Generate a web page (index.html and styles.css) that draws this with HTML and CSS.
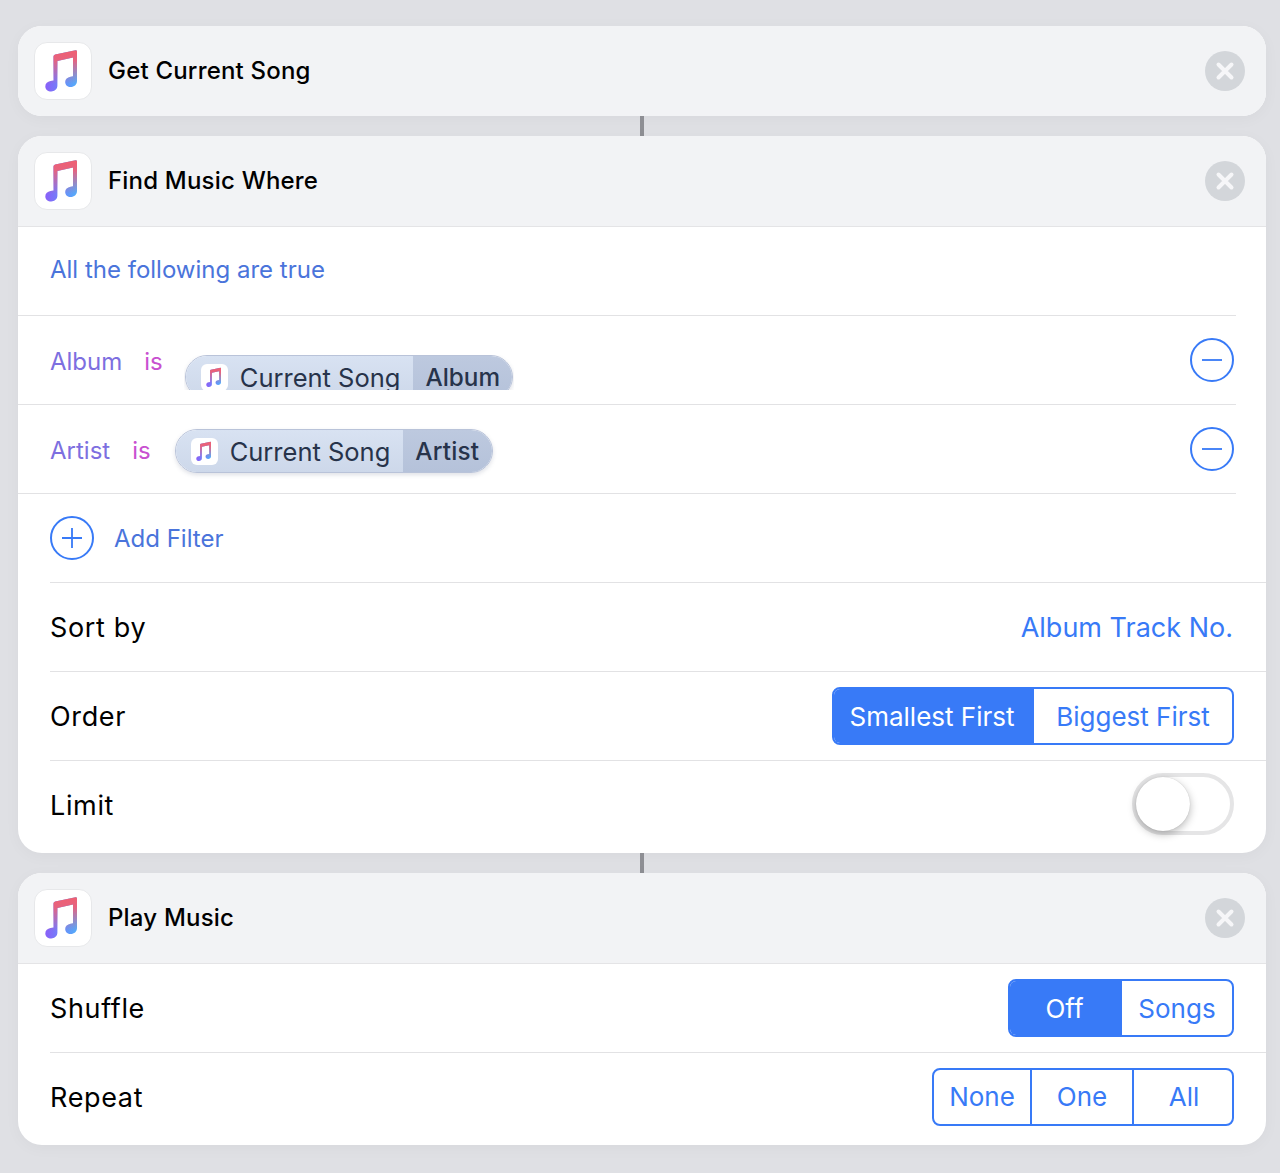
FILE: index.html
```html
<!DOCTYPE html>
<html lang="en">
<head>
<meta charset="utf-8">
<title>Shortcut</title>
<link rel="stylesheet" href="styles.css">
</head>
<body>
<svg class="defs" width="0" height="0" aria-hidden="true">
  <defs>
    <linearGradient id="noteBase" x1="11" y1="0" x2="43" y2="0" gradientUnits="userSpaceOnUse">
      <stop offset="0" stop-color="#8a5ef8"/><stop offset="1" stop-color="#52aefa"/>
    </linearGradient>
    <linearGradient id="noteTop" x1="0" y1="8" x2="0" y2="42" gradientUnits="userSpaceOnUse">
      <stop offset="0" stop-color="#ef5f72"/><stop offset="0.3" stop-color="#e6637f"/><stop offset="1" stop-color="#dc648e" stop-opacity="0"/>
    </linearGradient>
    <symbol id="note" viewBox="0 0 58 58">
      <path fill="url(#noteBase)" d="M19.500 14.500Q19.500 12.800 21.200 12.400L41.500 8.200Q43 8 43 9.500V39C43 42.800 40 45 36.800 45C33.600 45 31.200 43 31.200 40C31.200 37 33.500 35.300 36.500 34.700L39 34.200V15.600L23.400 18.900V43.500C23.400 47.300 20.500 49.400 17.200 49.400C14 49.400 11.300 47.400 11.300 44.400C11.300 41.400 13.600 39.600 16.500 39L19.500 38.400Z"/>
      <path fill="url(#noteTop)" d="M19.500 14.500Q19.500 12.800 21.200 12.400L41.500 8.200Q43 8 43 9.500V39C43 42.800 40 45 36.800 45C33.600 45 31.200 43 31.200 40C31.200 37 33.500 35.300 36.500 34.700L39 34.200V15.600L23.400 18.900V43.500C23.400 47.300 20.500 49.400 17.200 49.400C14 49.400 11.300 47.400 11.300 44.400C11.300 41.400 13.600 39.600 16.500 39L19.500 38.400Z"/>
    </symbol>
  </defs>
</svg>
<main class="flow">
  <section class="card">
    <header class="head">
      <span class="tile"><svg class="tile-note"><use href="#note"/></svg></span>
      <h2 class="title">Get Current Song</h2>
      <button class="close" aria-label="Remove"><svg viewBox="0 0 40 40" class="close-x"><path d="M13.500 13.500l13 13M26.500 13.500l-13 13"/></svg></button>
    </header>
  </section>
  <div class="link"></div>
  <section class="card">
    <header class="head head-line">
      <span class="tile"><svg class="tile-note"><use href="#note"/></svg></span>
      <h2 class="title">Find Music Where</h2>
      <button class="close" aria-label="Remove"><svg viewBox="0 0 40 40" class="close-x"><path d="M13.500 13.500l13 13M26.500 13.500l-13 13"/></svg></button>
    </header>
    <div class="frow frow-lead"><span class="link-text">All the following are true</span></div>
    <div class="frow">
      <span class="prop">Album</span><span class="is">is</span>
      <div class="pill-clip">
        <div class="pill">
          <span class="pill-main"><span class="mini"><svg class="mini-note"><use href="#note"/></svg></span>Current Song</span>
          <span class="pill-sub">Album</span>
        </div>
      </div>
      <button class="round" aria-label="Remove filter"><svg viewBox="0 0 44 44" class="round-i"><path d="M11 22h22"/></svg></button>
    </div>
    <div class="frow">
      <span class="prop">Artist</span><span class="is">is</span>
      <div class="pill pill-full">
        <span class="pill-main"><span class="mini"><svg class="mini-note"><use href="#note"/></svg></span>Current Song</span>
        <span class="pill-sub pill-sub-artist">Artist</span>
      </div>
      <button class="round" aria-label="Remove filter"><svg viewBox="0 0 44 44" class="round-i"><path d="M11 22h22"/></svg></button>
    </div>
    <div class="add">
      <button class="round round-left" aria-label="Add filter"><svg viewBox="0 0 44 44" class="round-i"><path d="M11 22h22M22 11v22"/></svg></button>
      <span class="link-text">Add Filter</span>
    </div>
    <div class="srow"><span class="label">Sort by</span><span class="value">Album Track No.</span></div>
    <div class="srow">
      <span class="label">Order</span>
      <div class="seg">
        <span class="opt opt-on opt-small">Smallest First</span>
        <span class="opt opt-big">Biggest First</span>
      </div>
    </div>
    <div class="srow srow-last">
      <span class="label">Limit</span>
      <span class="toggle"><span class="knob"></span></span>
    </div>
  </section>
  <div class="link"></div>
  <section class="card">
    <header class="head head-line">
      <span class="tile"><svg class="tile-note"><use href="#note"/></svg></span>
      <h2 class="title">Play Music</h2>
      <button class="close" aria-label="Remove"><svg viewBox="0 0 40 40" class="close-x"><path d="M13.500 13.500l13 13M26.500 13.500l-13 13"/></svg></button>
    </header>
    <div class="srow">
      <span class="label">Shuffle</span>
      <div class="seg">
        <span class="opt opt-on opt-off">Off</span>
        <span class="opt opt-songs">Songs</span>
      </div>
    </div>
    <div class="srow srow-end">
      <span class="label">Repeat</span>
      <div class="seg">
        <span class="opt opt-none">None</span>
        <span class="opt opt-one">One</span>
        <span class="opt opt-all">All</span>
      </div>
    </div>
  </section>
</main>
</body>
</html>
```
FILE: styles.css
```css
* { box-sizing: border-box; }
html, body { margin: 0; height: 100%; }
body {
  background: #dfe0e4;
  font-family: Inter, "Liberation Sans", sans-serif;
  color: #000;
  overflow: hidden;
}
.defs { position: absolute; }
.flow { width: 1248px; margin: 0 0 0 18px; padding-top: 26px; }
.card {
  background: #fff;
  border-radius: 24px;
  overflow: hidden;
  box-shadow: 0 3px 16px rgba(0, 0, 0, .035);
}
.link { width: 4px; height: 20px; margin: 0 auto; background: #8e8f94; }
.head {
  height: 90px;
  background: #f2f3f5;
  display: flex;
  align-items: center;
  padding: 0 21px 0 16px;
}
.head-line { height: 91px; border-bottom: 1px solid #e4e4e6; padding-bottom: 1px; }
.tile {
  width: 58px; height: 58px;
  border-radius: 13px;
  background: #fff;
  border: 1px solid #e7e8ea;
  flex: none;
  display: block;
}
.tile-note { display: block; width: 58px; height: 58px; margin: -1px; }
.title { margin: 0 0 0 16px; font-size: 24px; line-height: 30px; font-weight: 500; letter-spacing: .2px; flex: 1; }
.close { width: 40px; height: 40px; border: 0; padding: 0; border-radius: 50%; background: #d3d6da; flex: none; }
.close-x { display: block; width: 40px; height: 40px; fill: none; stroke: #f6f6f8; stroke-width: 4; stroke-linecap: round; }

.frow {
  height: 89px;
  margin-right: 30px;
  border-bottom: 1px solid #e2e2e4;
  padding: 0 2px 0 32px;
  display: flex;
  align-items: center;
}
.frow-lead { padding-bottom: 4px; }
.link-text { font-size: 24px; color: #4a74db; }
.prop { font-size: 24px; color: #7d6fe0; margin-right: 22px; padding-top: 2px; }
.is { font-size: 24px; color: #c850d0; margin-right: 24px; padding-top: 2px; }
.pill-clip { height: 35px; overflow: hidden; align-self: flex-end; margin: 0 0 14px -3px; padding: 0 1px; flex: none; }
.pill {
  height: 44px;
  display: flex;
  border: 1px solid #b9c3d9;
  border-radius: 22px;
  overflow: hidden;
  color: #27334a;
  font-size: 25.5px;
  box-shadow: 0 2px 4px rgba(80, 90, 120, .18);
  flex: none;
}
.pill-full { margin-top: 4px; }
.pill-main {
  display: flex;
  align-items: center;
  background: linear-gradient(#d8e2f2, #cdd8ea);
  padding: 0 13px 0 15px;
}
.mini { width: 27px; height: 27px; background: #fff; border-radius: 6px; margin-right: 12px; flex: none; }
.mini-note { display: block; width: 27px; height: 27px; }
.pill-sub {
  display: flex;
  align-items: center;
  background: linear-gradient(#bdc9df, #b5c2da);
  padding: 0 12px;
  font-weight: 500;
  font-size: 24.300px;
}
.pill-sub-artist { padding-right: 13px; letter-spacing: .2px; }
.round { width: 44px; height: 44px; border: 2px solid #387af7; border-radius: 50%; background: #fff; padding: 0; flex: none; margin-left: auto; }
.round-left { margin-left: 0; margin-right: 20px; }
.round-i { display: block; width: 40px; height: 40px; fill: none; stroke: #387af7; stroke-width: 2; }

.add {
  height: 89px;
  margin-left: 32px;
  border-bottom: 1px solid #e2e2e4;
  display: flex;
  align-items: center;
}
.srow {
  height: 89px;
  margin-left: 32px;
  padding-right: 32px;
  border-bottom: 1px solid #e2e2e4;
  display: flex;
  align-items: center;
  justify-content: space-between;
}
.srow-last { height: 92px; border-bottom: 0; padding-bottom: 4px; }
.srow-end { height: 92px; border-bottom: 0; padding-bottom: 4px; }
.label { font-size: 27px; letter-spacing: .65px; }
.value { font-size: 27px; color: #387af7; margin-right: 1px; }
.seg {
  display: flex;
  height: 58px;
  border: 2px solid #387af7;
  border-radius: 8px;
  overflow: hidden;
  font-size: 26px;
  color: #387af7;
}
.opt { display: flex; align-items: center; justify-content: center; border-left: 2px solid #387af7; }
.opt:first-child { border-left: 0; }
.opt-on { background: #387af7; color: #fff; }
.opt-small { width: 200px; padding-right: 4px; }
.opt-big { width: 198px; border-left: 0; }
.opt-off { width: 112px; padding-right: 3px; }
.opt-songs { width: 110px; border-left: 0; }
.opt-none { width: 96px; padding-bottom: 1px; }
.opt-one { width: 102px; padding-bottom: 1px; }
.opt-all { width: 100px; padding: 0 0 1px 2px; }
.toggle {
  width: 102px; height: 62px;
  border: 4px solid #e5e5e6;
  border-radius: 31px;
  background: #fff;
  display: block;
  margin-bottom: 2px;
}
.knob {
  display: block;
  width: 54px; height: 54px;
  border-radius: 50%;
  background: #fff;
  box-shadow: 0 3px 8px rgba(0, 0, 0, .28), 0 0 1px rgba(0, 0, 0, .2);
}
```
